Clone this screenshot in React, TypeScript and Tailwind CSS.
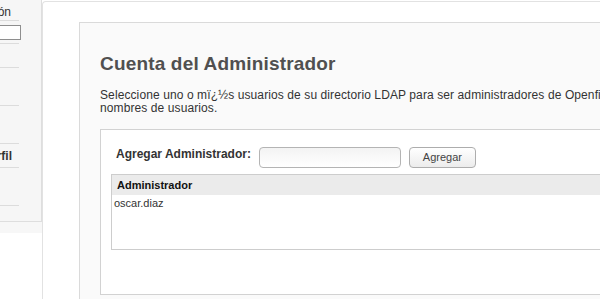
import React from 'react'

const font = { fontFamily: '"Liberation Sans", Arial, sans-serif' }

function Sidebar() {
  return (
    <div className="w-[42px] h-[233px] shrink-0 bg-[#f7f7f7]">
      <div className="w-[42px] h-[222px] bg-[#f6f6f6] border-r border-b border-[#dedede] overflow-hidden">
        {/* section title, cut off on the left */}
        <div className="w-[19px] h-[21px] border-b border-[#dcdcdc] flex justify-end items-center pr-[8px] overflow-hidden">
          <span className="whitespace-nowrap text-[12px] text-[#333] leading-[14px] mt-[3px]">ón</span>
        </div>
        <div className="w-[19px] h-[23px] border-b border-[#dcdcdc] pt-[4px]">
          <input className="block ml-[-10px] w-[31px] h-[15px] border border-[#8e8e8e] bg-white outline-none" />
        </div>
        <div className="w-[19px] h-[24px] border-b border-[#dcdcdc]" />
        <div className="w-[19px] h-[38px] border-b border-[#dcdcdc]" />
        <div className="w-[19px] h-[38px] border-b border-[#dcdcdc]" />
        <div className="w-[19px] h-[24px] border-b border-[#dcdcdc] flex justify-end items-center pr-[7px] overflow-hidden">
          <span className="whitespace-nowrap text-[12px] font-bold text-[#333] leading-[14px]">rfil</span>
        </div>
        <div className="w-[19px] h-[38px] border-b border-[#dcdcdc]" />
      </div>
    </div>
  )
}

export default function App() {
  return (
    <div className="w-[600px] h-[299px] overflow-hidden bg-white flex items-start" style={font}>
      <Sidebar />
      <div className="flex-1 mt-[1px] h-[298px] border-t border-l border-[#e2e2e2] rounded-tl-[4px] bg-white pl-[36px] pt-[20px] overflow-hidden">
        <div className="w-[600px] h-[300px] border border-[#dadada] bg-[#fafafa] pl-[20px] pt-[30px]">
          <h1 className="text-[19px] leading-[22px] font-bold text-[#505050] tracking-[0.17px]">Cuenta del Administrador</h1>
          <p className="mt-[14px] text-[12px] leading-[13px] text-[#333] whitespace-nowrap tracking-[0.1px]">
            Seleccione uno o mï¿½s usuarios de su directorio LDAP para ser administradores de Openfire. Separe con comas los
            <br />
            nombres de usuarios.
          </p>

          <div className="mt-[14px] h-[166px] border border-[#d2d2d2] bg-white pl-[10px] pt-[15px]">
            <div className="flex items-start pl-[5px]">
              <label className="mt-[1px] text-[12px] leading-[16px] font-bold text-[#333] whitespace-nowrap">
                Agregar Administrador:
              </label>
              <input
                type="text"
                className="ml-[8px] mt-[2px] w-[142px] h-[21px] rounded-[4px] border border-[#b4b4b4] bg-gradient-to-b from-[#f3f3f3] to-white outline-none"
              />
              <button className="ml-[8px] mt-[2px] w-[67px] h-[21px] rounded-[4px] border border-[#adadad] bg-gradient-to-b from-white to-[#ececec] text-[11px] leading-[19px] text-[#444]">
                Agregar
              </button>
            </div>

            <div className="mt-[6px] w-[560px] border border-[#cdcdcd] bg-white">
              <div className="h-[20px] bg-[#ebebeb] pl-[5px] text-[11px] leading-[20px] font-bold text-[#111]">
                Administrador
              </div>
              <div className="h-[54px] pl-[2px] text-[11px] leading-[16px] text-[#333]">oscar.diaz</div>
            </div>
          </div>
        </div>
      </div>
    </div>
  )
}
